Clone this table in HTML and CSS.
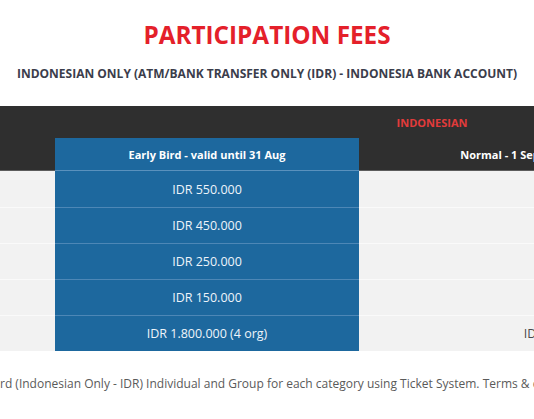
FILE: index.html
```html
<!DOCTYPE html>
<html>
<head>
<meta charset="utf-8">
<link rel="stylesheet" href="styles.css">
</head>
<body>
<div class="page">
  <h1 class="title">PARTICIPATION FEES</h1>
  <h2 class="subtitle">INDONESIAN ONLY (ATM/BANK TRANSFER ONLY (IDR) - INDONESIA BANK ACCOUNT)</h2>
  <table class="fees">
    <colgroup>
      <col class="c-cat">
      <col class="c-early">
      <col class="c-normal">
    </colgroup>
    <thead>
      <tr class="head-top">
        <th rowspan="2" class="h-cat"></th>
        <th colspan="2" class="h-group">INDONESIAN</th>
      </tr>
      <tr class="head-sub">
        <th class="h-early">Early Bird - valid until 31 Aug</th>
        <th class="h-normal">Normal - 1 September - valid until 31 October</th>
      </tr>
    </thead>
    <tbody>
      <tr><td class="cat"></td><td class="early">IDR 550.000</td><td class="normal">IDR 650.000</td></tr>
      <tr><td class="cat"></td><td class="early">IDR 450.000</td><td class="normal">IDR 550.000</td></tr>
      <tr><td class="cat"></td><td class="early">IDR 250.000</td><td class="normal">IDR 350.000</td></tr>
      <tr><td class="cat"></td><td class="early">IDR 150.000</td><td class="normal">IDR 250.000</td></tr>
      <tr><td class="cat"></td><td class="early">IDR 1.800.000 (4 org)</td><td class="normal">IDR 2.200.000 (4 org)</td></tr>
    </tbody>
  </table>
  <p class="note">rd (Indonesian Only - IDR) Individual and Group for each category using Ticket System. Terms &amp; conditions apply.</p>
</div>
</body>
</html>
```

FILE: styles.css
```css
html, body {
  margin: 0;
  padding: 0;
  overflow: hidden;
  background: #ffffff;
}

body {
  font-family: "Open Sans", "DejaVu Sans", sans-serif;
  width: 534px;
  height: 419px;
}

.page {
  width: 1084px;
  margin-left: -275px;
}

.title {
  margin: 0;
  padding-top: 20px;
  font-size: 24.3px;
  line-height: 30px;
  font-weight: 700;
  color: #e4202a;
  text-align: center;
}

.subtitle {
  margin: 16px 0 0;
  font-size: 12px;
  line-height: 16px;
  font-weight: 700;
  color: #3b3d4b;
  text-align: center;
}

.fees {
  margin-top: 24px;
  border-collapse: collapse;
  border-spacing: 0;
  table-layout: fixed;
  width: 1084px;
}

.c-cat { width: 330px; }
.c-early { width: 304px; }
.c-normal { width: 450px; }

.fees th {
  padding: 0;
  font-size: 11px;
  font-weight: 700;
  text-align: center;
  background: #2f2f2f;
  color: #ffffff;
}

.fees .head-top th {
  height: 32px;
}

.fees .head-sub th {
  height: 32px;
  border-bottom: 1px solid #5c5c5c;
}

.fees .h-cat {
  border-bottom: 1px solid #5c5c5c;
}

.fees .h-group {
  color: #e23b3b;
}

.fees .head-sub .h-early {
  background: #1d689e;
  border-bottom-color: #5a91bd;
}

.fees td {
  height: 35px;
  padding: 0;
  font-size: 12.5px;
  text-align: center;
  background: #f2f2f2;
  color: #4a4a4a;
  border-top: 1px solid #fafafa;
}

.fees tbody tr:first-child td {
  border-top: none;
  height: 36px;
}

.fees td.early {
  background: #1d689e;
  color: #eef4fa;
  border-top-color: #4d87b6;
}

.note {
  margin: 24px 0 0 275px;
  font-size: 12px;
  line-height: 18px;
  color: #5a5a5a;
  white-space: nowrap;
}
```
